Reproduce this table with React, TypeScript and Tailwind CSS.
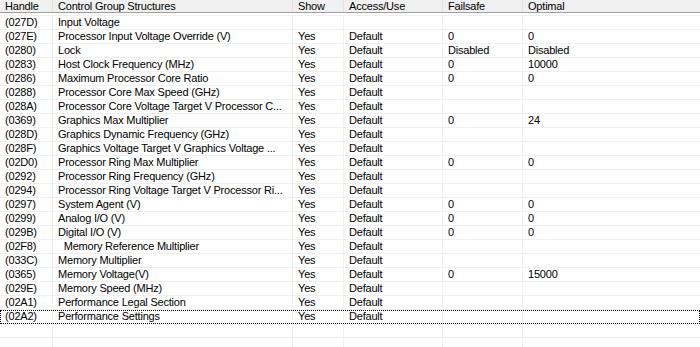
import React from "react";

type Row = {
  handle: string;
  name: string;
  show?: string;
  access?: string;
  failsafe?: string;
  optimal?: string;
};

const ROWS: Row[] = [
  { handle: "(027D)", name: "Input Voltage" },
  { handle: "(027E)", name: "Processor Input Voltage Override (V)", show: "Yes", access: "Default", failsafe: "0", optimal: "0" },
  { handle: "(0280)", name: "Lock", show: "Yes", access: "Default", failsafe: "Disabled", optimal: "Disabled" },
  { handle: "(0283)", name: "Host Clock Frequency (MHz)", show: "Yes", access: "Default", failsafe: "0", optimal: "10000" },
  { handle: "(0286)", name: "Maximum Processor Core Ratio", show: "Yes", access: "Default", failsafe: "0", optimal: "0" },
  { handle: "(0288)", name: "Processor Core Max Speed (GHz)", show: "Yes", access: "Default" },
  { handle: "(028A)", name: "Processor Core Voltage Target V Processor C...", show: "Yes", access: "Default" },
  { handle: "(0369)", name: "Graphics Max Multiplier", show: "Yes", access: "Default", failsafe: "0", optimal: "24" },
  { handle: "(028D)", name: "Graphics Dynamic Frequency (GHz)", show: "Yes", access: "Default" },
  { handle: "(028F)", name: "Graphics Voltage Target V Graphics Voltage ...", show: "Yes", access: "Default" },
  { handle: "(02D0)", name: "Processor Ring Max Multiplier", show: "Yes", access: "Default", failsafe: "0", optimal: "0" },
  { handle: "(0292)", name: "Processor Ring Frequency (GHz)", show: "Yes", access: "Default" },
  { handle: "(0294)", name: "Processor Ring Voltage Target V Processor Ri...", show: "Yes", access: "Default" },
  { handle: "(0297)", name: "System Agent (V)", show: "Yes", access: "Default", failsafe: "0", optimal: "0" },
  { handle: "(0299)", name: "Analog I/O (V)", show: "Yes", access: "Default", failsafe: "0", optimal: "0" },
  { handle: "(029B)", name: "Digital I/O (V)", show: "Yes", access: "Default", failsafe: "0", optimal: "0" },
  { handle: "(02F8)", name: "  Memory Reference Multiplier", show: "Yes", access: "Default" },
  { handle: "(033C)", name: "Memory Multiplier", show: "Yes", access: "Default" },
  { handle: "(0365)", name: "Memory Voltage(V)", show: "Yes", access: "Default", failsafe: "0", optimal: "15000" },
  { handle: "(029E)", name: "Memory Speed (MHz)", show: "Yes", access: "Default" },
  { handle: "(02A1)", name: "Performance Legal Section", show: "Yes", access: "Default" },
  { handle: "(02A2)", name: "Performance Settings", show: "Yes", access: "Default" },
];

const COLS = "grid grid-cols-[53px_240px_51px_99px_80px_1fr]";
const HEADERS = ["Handle", "Control Group Structures", "Show", "Access/Use", "Failsafe", "Optimal"];

export default function App() {
  return (
    <div
      className="w-[700px] h-[347px] overflow-hidden bg-white text-black text-[11px] tracking-[-0.2px]"
      style={{ fontFamily: '"Liberation Sans", Arial, sans-serif' }}
    >
      {/* column header */}
      <div className={`${COLS} h-[13px] bg-[#f0f0f0] border-b border-[#a0a0a0]`}>
        {HEADERS.map((h, i) => (
          <div
            key={h}
            className={`pl-[5px] leading-[12px] whitespace-nowrap ${i < 5 ? "border-r border-[#e3e3e3]" : ""}`}
          >
            {h}
          </div>
        ))}
      </div>

      <div className="h-[2px]" />

      <div className="border-t border-[#f0f0f0]">
        {ROWS.map((r, idx) => {
          const focused = idx === ROWS.length - 1;
          const cells = [r.handle, r.name, r.show, r.access, r.failsafe, r.optimal];
          return (
            <div
              key={r.handle}
              className={`${COLS} h-[14px] border-b ${focused ? "border-[#f0f0f0] outline outline-1 outline-dotted outline-black -outline-offset-1" : "border-[#f0f0f0]"}`}
            >
              {cells.map((c, i) => (
                <div
                  key={i}
                  className={`pl-[5px] leading-[13px] whitespace-pre overflow-hidden ${i < 5 ? "border-r border-[#f0f0f0]" : ""}`}
                >
                  {c ?? ""}
                </div>
              ))}
            </div>
          );
        })}
        {[0, 1].map((k) => (
          <div key={`e${k}`} className={`${COLS} h-[14px] border-b border-[#f0f0f0]`}>
            {[0, 1, 2, 3, 4, 5].map((i) => (
              <div key={i} className={i < 5 ? "border-r border-[#f0f0f0]" : ""} />
            ))}
          </div>
        ))}
      </div>
    </div>
  );
}
